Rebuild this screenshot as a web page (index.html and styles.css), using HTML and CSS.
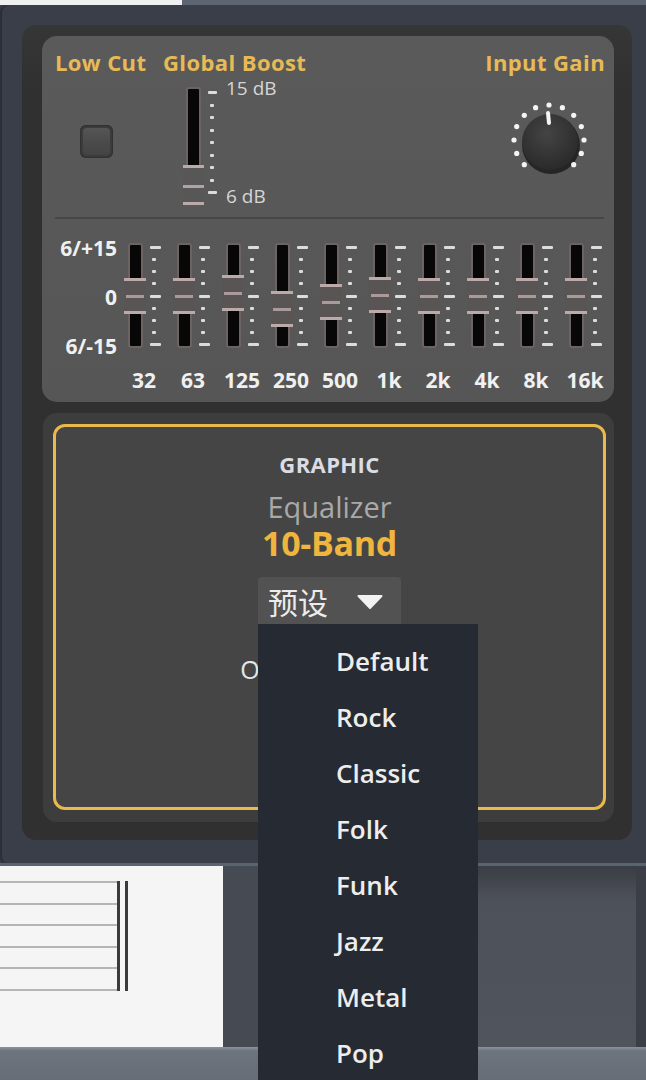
FILE: index.html
```html
<!DOCTYPE html>
<html lang="en">
<head>
<meta charset="utf-8">
<title>Graphic Equalizer 10-Band</title>
<link rel="stylesheet" href="styles.css">
</head>
<body>
<div class="screen">
  <div class="topstrip"><div class="ts-left"></div><div class="ts-right"></div></div>

  <div class="window">
    <div class="body">
      <section class="toppanel">
        <div class="row1">
          <div class="col lowcut">
            <div class="lbl">Low Cut</div>
            <div class="checkbox"><div class="checkbox-in"></div></div>
          </div>
          <div class="col boost">
            <div class="lbl">Global Boost</div>
            <div class="boost-ctl">
              <div class="btrack"><div class="bhandle"><i></i></div></div>
              <div class="ticks bticks"><i class="l"></i><i></i><i></i><i></i><i></i><i></i><i></i><i></i><i class="l"></i></div>
              <div class="bscale"><span>15 dB</span><span>6 dB</span></div>
            </div>
          </div>
          <div class="col gain">
            <div class="lbl">Input Gain</div>
            <svg class="knob" width="80" height="80" viewBox="0 0 80 80">
              <defs>
                <radialGradient id="kg" cx="45%" cy="35%" r="70%">
                  <stop offset="0" stop-color="#444444"/>
                  <stop offset="1" stop-color="#282828"/>
                </radialGradient>
              </defs>
              <circle cx="43" cy="46" r="29" fill="#1c1c1c" opacity="0.85"/>
              <circle cx="42" cy="43" r="28" fill="url(#kg)"/>
              <g fill="#f4f4f4">
                <circle cx="41" cy="6" r="2.6"/>
                <circle cx="54.4" cy="8.7" r="2.6"/>
                <circle cx="27.6" cy="8.7" r="2.6"/>
                <circle cx="65.7" cy="16.3" r="2.6"/>
                <circle cx="16.3" cy="16.3" r="2.6"/>
                <circle cx="73.3" cy="27.6" r="2.6"/>
                <circle cx="8.7" cy="27.6" r="2.6"/>
                <circle cx="76" cy="41" r="2.6"/>
                <circle cx="6" cy="41" r="2.6"/>
                <circle cx="73.3" cy="54.4" r="2.6"/>
                <circle cx="8.7" cy="54.4" r="2.6"/>
                <circle cx="65.7" cy="65.7" r="2.6"/>
                <circle cx="16.3" cy="65.7" r="2.6"/>
              </g>
              <line x1="40" y1="14" x2="41" y2="24" stroke="#f4f4f4" stroke-width="4" stroke-linecap="round"/>
            </svg>
          </div>
        </div>
        <div class="sep"></div>
        <div class="eq">
          <div class="eq-scale"><span>6/+15</span><span>0</span><span>6/-15</span></div>
          <div class="bands">
            <div class="band"><div class="fader"><div class="fwrap"><div class="ftrack"></div><div class="fhandle" style="top:35px"><i></i></div></div><div class="ticks fticks"><i class="l"></i><i></i><i></i><i></i><i class="l"></i><i></i><i></i><i></i><i class="l"></i></div></div><div class="freq">32</div></div>
            <div class="band"><div class="fader"><div class="fwrap"><div class="ftrack"></div><div class="fhandle" style="top:35px"><i></i></div></div><div class="ticks fticks"><i class="l"></i><i></i><i></i><i></i><i class="l"></i><i></i><i></i><i></i><i class="l"></i></div></div><div class="freq">63</div></div>
            <div class="band"><div class="fader"><div class="fwrap"><div class="ftrack"></div><div class="fhandle" style="top:32px"><i></i></div></div><div class="ticks fticks"><i class="l"></i><i></i><i></i><i></i><i class="l"></i><i></i><i></i><i></i><i class="l"></i></div></div><div class="freq">125</div></div>
            <div class="band"><div class="fader"><div class="fwrap"><div class="ftrack"></div><div class="fhandle" style="top:48px"><i></i></div></div><div class="ticks fticks"><i class="l"></i><i></i><i></i><i></i><i class="l"></i><i></i><i></i><i></i><i class="l"></i></div></div><div class="freq">250</div></div>
            <div class="band"><div class="fader"><div class="fwrap"><div class="ftrack"></div><div class="fhandle" style="top:41px"><i></i></div></div><div class="ticks fticks"><i class="l"></i><i></i><i></i><i></i><i class="l"></i><i></i><i></i><i></i><i class="l"></i></div></div><div class="freq">500</div></div>
            <div class="band"><div class="fader"><div class="fwrap"><div class="ftrack"></div><div class="fhandle" style="top:34px"><i></i></div></div><div class="ticks fticks"><i class="l"></i><i></i><i></i><i></i><i class="l"></i><i></i><i></i><i></i><i class="l"></i></div></div><div class="freq">1k</div></div>
            <div class="band"><div class="fader"><div class="fwrap"><div class="ftrack"></div><div class="fhandle" style="top:35px"><i></i></div></div><div class="ticks fticks"><i class="l"></i><i></i><i></i><i></i><i class="l"></i><i></i><i></i><i></i><i class="l"></i></div></div><div class="freq">2k</div></div>
            <div class="band"><div class="fader"><div class="fwrap"><div class="ftrack"></div><div class="fhandle" style="top:35px"><i></i></div></div><div class="ticks fticks"><i class="l"></i><i></i><i></i><i></i><i class="l"></i><i></i><i></i><i></i><i class="l"></i></div></div><div class="freq">4k</div></div>
            <div class="band"><div class="fader"><div class="fwrap"><div class="ftrack"></div><div class="fhandle" style="top:35px"><i></i></div></div><div class="ticks fticks"><i class="l"></i><i></i><i></i><i></i><i class="l"></i><i></i><i></i><i></i><i class="l"></i></div></div><div class="freq">8k</div></div>
            <div class="band"><div class="fader"><div class="fwrap"><div class="ftrack"></div><div class="fhandle" style="top:35px"><i></i></div></div><div class="ticks fticks"><i class="l"></i><i></i><i></i><i></i><i class="l"></i><i></i><i></i><i></i><i class="l"></i></div></div><div class="freq">16k</div></div>
          </div>
        </div>
      </section>

      <section class="botframe">
        <div class="card">
          <div class="graphic">GRAPHIC</div>
          <div class="eqname">Equalizer</div>
          <div class="band10">10-Band</div>
          <div class="select">
            <span class="select-text">预设</span>
            <svg class="caret" width="26" height="14" viewBox="0 0 26 14"><path d="M1.5 1 H24.5 L13 13 Z" fill="#f2f2f2" stroke="#f2f2f2" stroke-width="2" stroke-linejoin="round"/></svg>
          </div>
          <div class="output">Output Volume</div>
        </div>
      </section>
    </div>
  </div>

  <div class="lower">
    <div class="sheet">
      <div class="staff">
        <div class="lines"><i></i><i></i><i></i><i></i><i></i><i></i></div>
        <div class="bar"></div>
        <div class="bar bar2"></div>
      </div>
    </div>
    <div class="darkcol"></div>
    <div class="under"></div>
    <div class="graypanel"></div>
    <div class="edge"></div>
  </div>
  <div class="bottomstrip"></div>

  <ul class="menu">
    <li>Default</li>
    <li>Rock</li>
    <li>Classic</li>
    <li>Folk</li>
    <li>Funk</li>
    <li>Jazz</li>
    <li>Metal</li>
    <li>Pop</li>
  </ul>
</div>
</body>
</html>
```

FILE: styles.css
```css
* { box-sizing: border-box; margin: 0; padding: 0; }

body {
  margin: 0;
  width: 646px;
  height: 1080px;
  overflow: hidden;
  background: #3a3f4a;
  font-family: "Open Sans", "Noto Sans", "Noto Sans CJK SC", sans-serif;
}

.screen { position: relative; width: 646px; height: 1080px; overflow: hidden; }

/* strip above the window */
.topstrip { display: flex; height: 5px; }
.ts-left { width: 182px; background: #f0f0f0; }
.ts-right { flex: 1; background: #5c6571; }

/* plugin window */
.window {
  margin-left: 2px;
  height: 858px;
  background: #3a3e49;
  border-radius: 8px 0 0 6px;
  padding: 20px 14px 23px 20px;
  box-shadow: -2px 0 3px rgba(0, 0, 0, 0.35);
}
.body {
  height: 100%;
  background: linear-gradient(#363636, #303030 60px, #303030);
  border-radius: 14px;
  padding: 11px 18px 0 20px;
  display: flex;
  flex-direction: column;
  gap: 11px;
}

/* top panel */
.toppanel {
  height: 366px;
  background: linear-gradient(#5a5a5a, #565656);
  border-radius: 15px;
  padding: 14px 9px 0 13px;
}
.row1 { display: flex; height: 167px; }
.lbl {
  font-size: 22px;
  font-weight: 700;
  line-height: 24px;
  color: #e8ba55;
  white-space: nowrap;
  letter-spacing: 0.4px;
}
.lowcut { width: 88px; margin-right: 20px; flex-shrink: 0; }
.checkbox {
  width: 33px;
  height: 33px;
  margin: 51px 0 0 25px;
  border-radius: 6px;
  background: #3c3c3c;
  padding: 3px;
  box-shadow: inset 0 0 2px rgba(0,0,0,0.6);
}
.checkbox-in {
  width: 100%;
  height: 100%;
  border-radius: 4px;
  background: linear-gradient(#555, #4a4a4a 55%, #444);
}

.boost { width: 146px; flex-shrink: 0; }
.boost-ctl { display: flex; height: 118px; margin: 13px 0 0 23px; }
.btrack {
  position: relative;
  width: 15px;
  height: 118px;
  background: #070707;
  border: 2px solid #6d6363;
  border-radius: 3px;
}
.bhandle {
  position: absolute;
  left: -5px;
  top: 76px;
  width: 21px;
  height: 40px;
  background: #575757;
  border-top: 3px solid #bca9a9;
  border-bottom: 3px solid #bca9a9;
}
.bhandle i { display: block; height: 3px; margin-top: 17px; background: #b3a2a2; }

.ticks { display: flex; flex-direction: column; justify-content: space-between; }
.ticks i { display: block; height: 3px; width: 4px; margin-left: 2px; background: #dcdcdc; border-radius: 1px; }
.ticks i.l { width: 11px; margin-left: 0; }
.bticks { width: 11px; height: 103px; margin: 4px 0 0 7px; }
.bticks i.l { width: 9px; }
.bscale {
  display: flex;
  flex-direction: column;
  justify-content: space-between;
  height: 128px;
  margin: -9px 0 0 7px;
  font-size: 19px;
  line-height: 20px;
  color: #d6d6d6;
  white-space: nowrap;
}

.gain { margin-left: auto; width: 112px; display: flex; flex-direction: column; align-items: flex-end; }
.knob { display: block; margin: 25px 17px 0 0; }

.sep { height: 2px; background: #464646; margin-right: 1px; }

/* EQ faders */
.eq { display: flex; height: 181px; margin-left: -8px; }
.eq-scale {
  flex-shrink: 0;
  width: 70px;
  height: 120px;
  margin-top: 18px;
  display: flex;
  flex-direction: column;
  justify-content: space-between;
  align-items: flex-end;
  font-size: 21px;
  font-weight: 700;
  line-height: 22px;
  color: #f0f0f0;
}
.bands { display: flex; margin-left: 7px; flex-shrink: 0; }
.band { width: 49px; padding-top: 24px; flex-shrink: 0; }
.fader { display: flex; height: 105px; }
.fwrap { position: relative; width: 22px; }
.ftrack {
  margin-left: 4px;
  width: 15px;
  height: 105px;
  background: #070707;
  border: 2px solid #6d6363;
  border-radius: 3px;
}
.fhandle {
  position: absolute;
  left: 0;
  width: 22px;
  height: 36px;
  background: #595555;
  border-top: 3px solid #bca9a9;
  border-bottom: 3px solid #bca9a9;
}
.fhandle i { display: block; height: 3px; margin: 14px 2px 0; background: #ab9a9a; }
.fticks { width: 11px; height: 100px; margin: 3px 0 0 4px; }
.freq {
  width: 40px;
  margin-top: 19px;
  text-align: center;
  font-size: 21px;
  font-weight: 700;
  line-height: 26px;
  color: #f0f0f0;
}

/* lower frame with yellow card */
.botframe {
  height: 409px;
  margin-left: 1px;
  background: #3d3d3d;
  border-radius: 14px;
  padding: 11px 8px 12px 10px;
}
.card {
  height: 100%;
  border: 3px solid #e9b94a;
  border-radius: 12px;
  background: #454545;
  display: flex;
  flex-direction: column;
  align-items: center;
  padding-top: 25px;
}
.graphic {
  font-size: 22px;
  font-weight: 700;
  line-height: 24px;
  letter-spacing: 0.4px;
  color: #dcdce4;
}
.eqname {
  margin-top: 16px;
  font-size: 29px;
  line-height: 30px;
  color: #a9a9a9;
}
.band10 {
  margin-top: 3px;
  font-size: 34px;
  line-height: 36px;
  font-weight: 700;
  letter-spacing: -0.3px;
  color: #f0b53e;
}
.select {
  margin-top: 16px;
  width: 143px;
  height: 48px;
  display: flex;
  align-items: center;
  padding-left: 10px;
  background: #525252;
  border-radius: 4px 4px 0 0;
}
.select-text {
  font-family: "Noto Sans CJK SC", "Noto Sans", sans-serif;
  font-size: 30px;
  line-height: 40px;
  color: #ececec;
}
.caret { margin-left: 29px; margin-top: 2px; }
.output {
  margin-top: 31px;
  font-size: 25px;
  line-height: 26px;
  color: #e6e6e6;
  white-space: nowrap;
}

/* background application below the window */
.lower { display: flex; height: 184px; border-top: 3px solid #5a6370; }
.sheet { width: 223px; background: #f5f5f5; padding-top: 15px; }
.staff { display: flex; height: 110px; }
.lines { width: 117px; display: flex; flex-direction: column; justify-content: space-between; }
.lines i { display: block; height: 2px; background: #b5b5b5; }
.bar { width: 3px; background: #3b3b3b; }
.bar2 { margin-left: 5px; }
.darkcol { width: 35px; background: #464b53; }
.under { width: 220px; background: #464b53; }
.graypanel { width: 158px; background: linear-gradient(#3a3d44, #4d5159 35px, #50545c); }
.edge { flex: 1; background: #3b3e46; }
.bottomstrip { height: 33px; background: linear-gradient(#8c939c, #6e747e 4px, #676d77); }

/* open dropdown list */
.menu {
  position: absolute;
  left: 258px;
  top: 624px;
  width: 220px;
  height: 470px;
  background: #262a33;
  padding: 9px 0 0 78px;
  list-style: none;
}
.menu li {
  height: 56px;
  line-height: 56px;
  font-size: 26px;
  font-weight: 600;
  color: #ededed;
}
```
